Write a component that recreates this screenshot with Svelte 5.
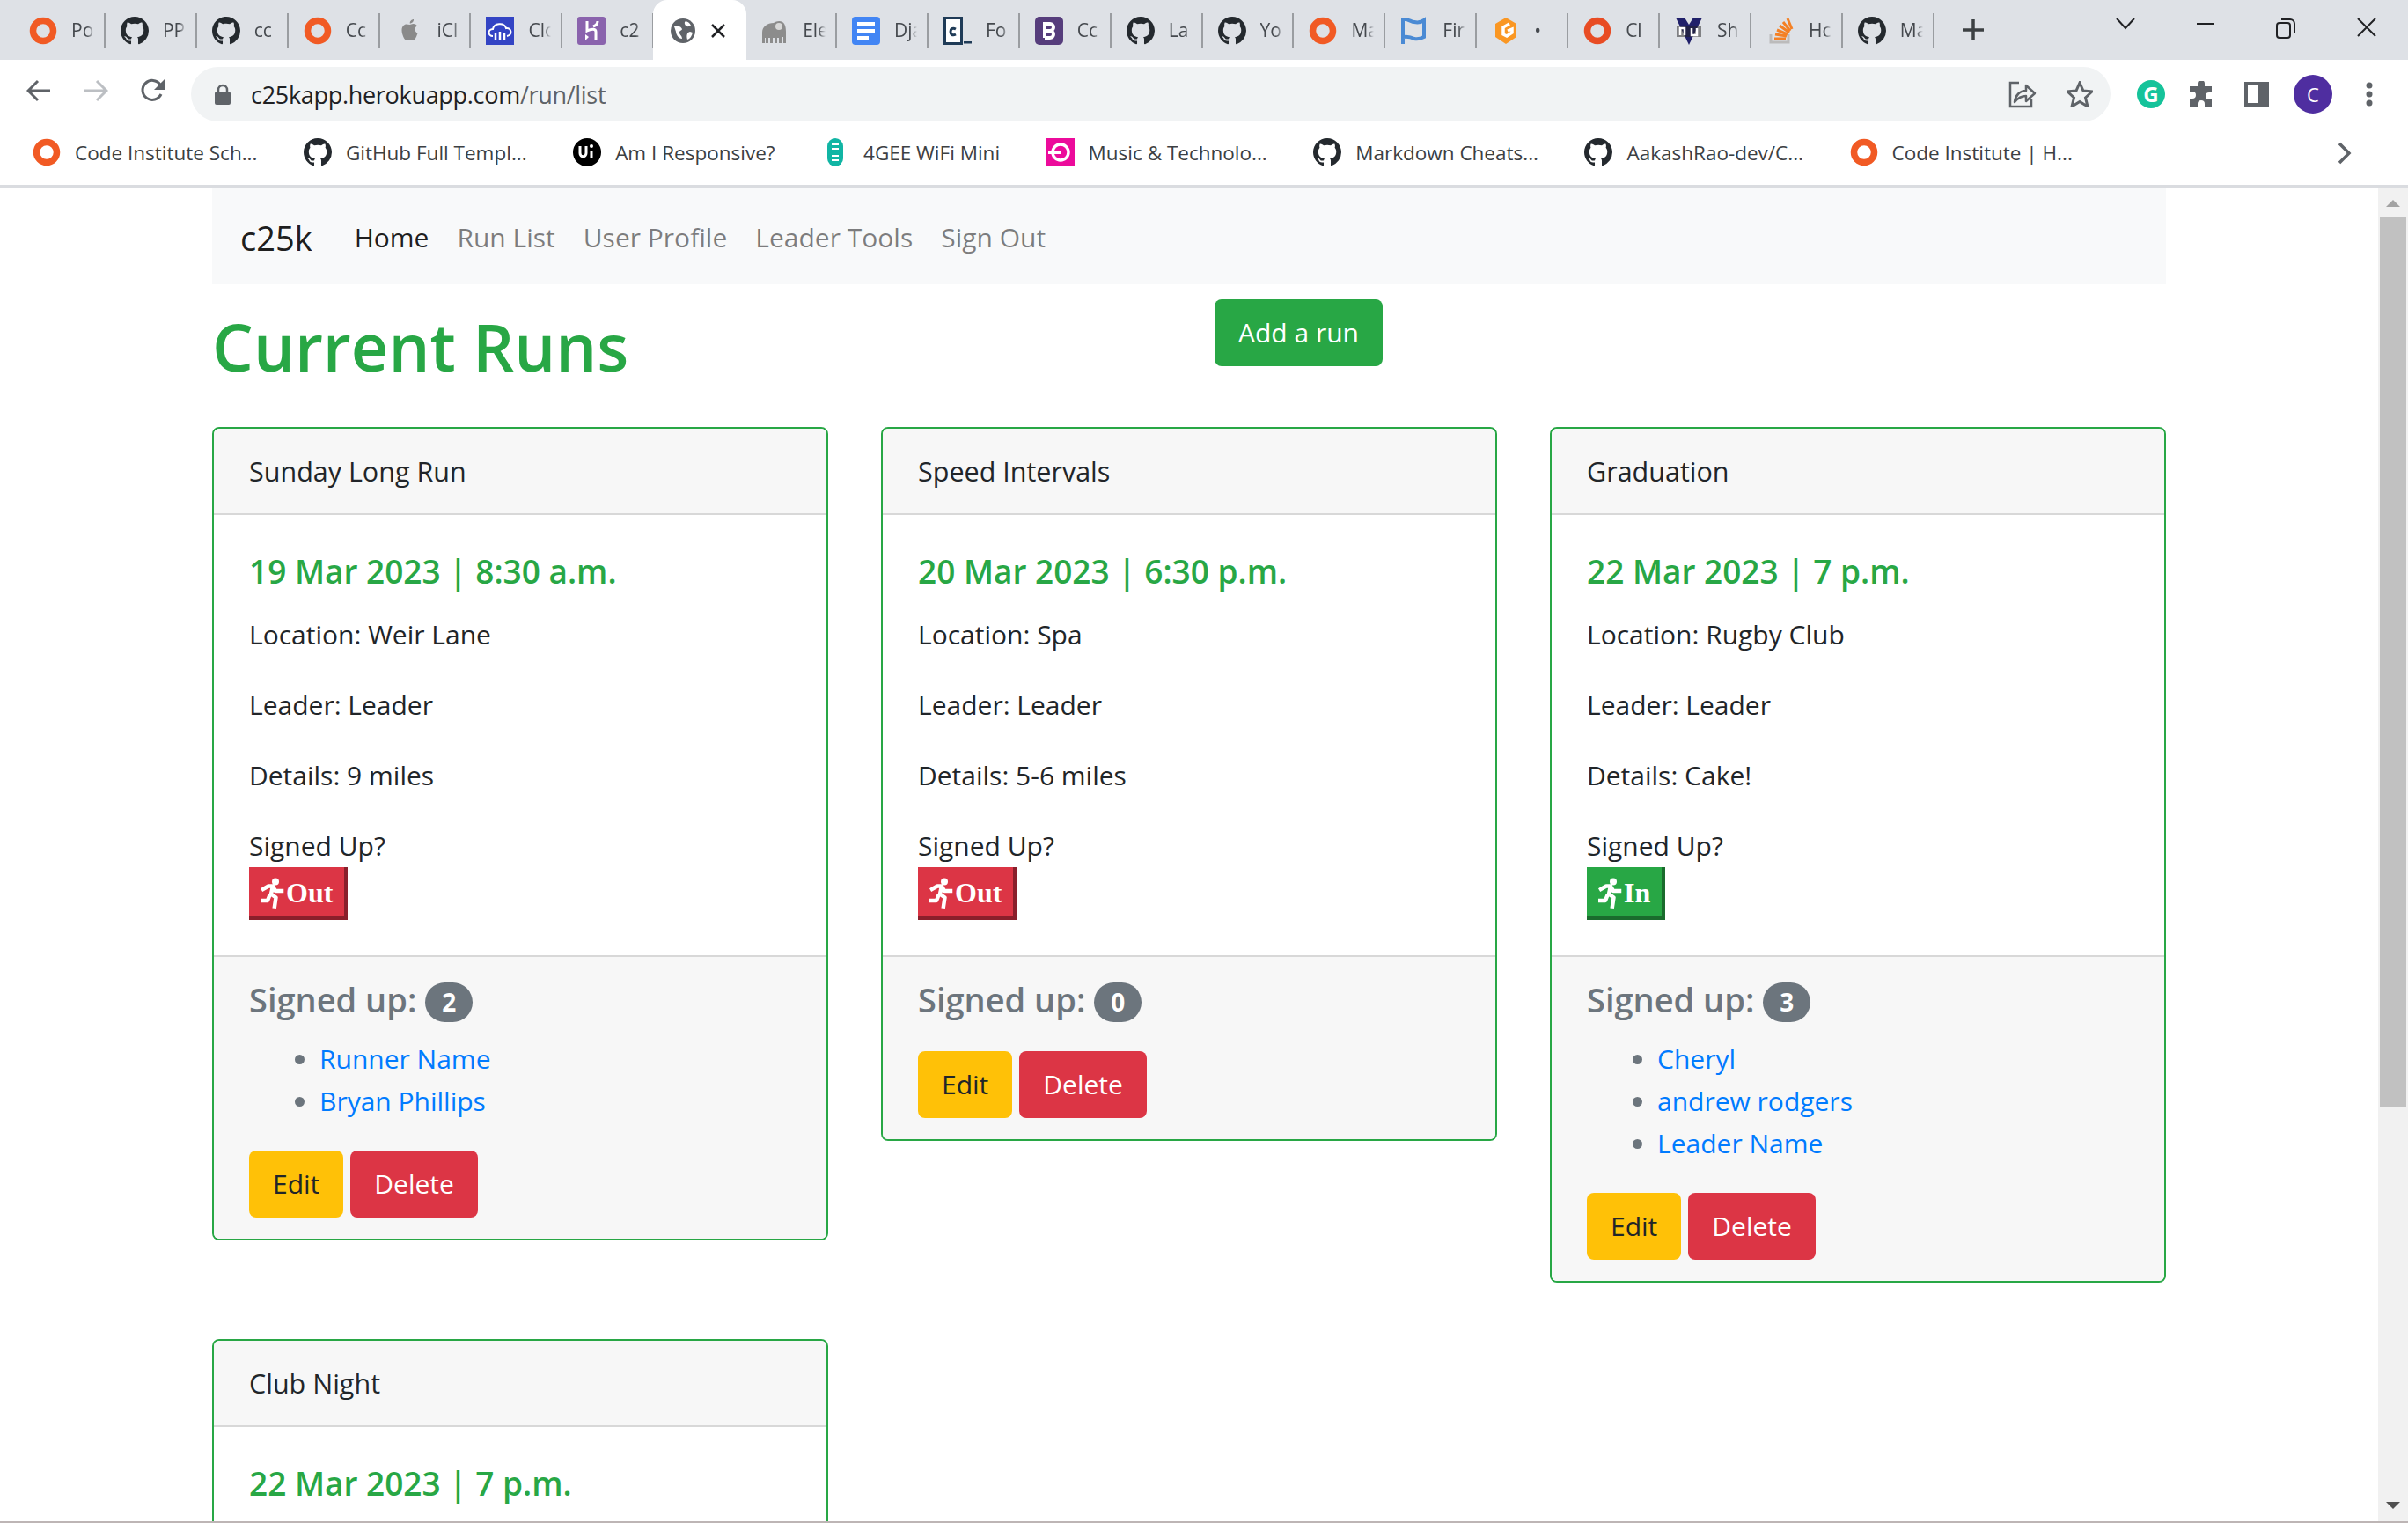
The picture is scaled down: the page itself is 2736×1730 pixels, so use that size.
<script>
	const ghPath = 'M8 0C3.58 0 0 3.58 0 8c0 3.54 2.29 6.53 5.47 7.59.4.07.55-.17.55-.38 0-.19-.01-.82-.01-1.49-2.01.37-2.53-.49-2.69-.94-.09-.23-.48-.94-.82-1.13-.28-.15-.68-.52-.01-.53.63-.01 1.08.58 1.23.82.72 1.21 1.87.87 2.33.66.07-.52.28-.87.51-1.07-1.78-.2-3.64-.89-3.64-3.95 0-.87.31-1.59.82-2.15-.08-.2-.36-1.02.08-2.12 0 0 .67-.21 2.2.82.64-.18 1.32-.27 2-.27.68 0 1.36.09 2 .27 1.53-1.04 2.2-.82 2.2-.82.44 1.1.16 1.92.08 2.12.51.56.82 1.27.82 2.15 0 3.07-1.87 3.75-3.65 3.95.29.25.54.73.54 1.48 0 1.07-.01 1.93-.01 2.2 0 .21.15.46.55.38A8.013 8.013 0 0016 8c0-4.42-3.58-8-8-8z';

	const tabs = [
		{ icon: 'ring', text: 'Po' },
		{ icon: 'gh', text: 'PP' },
		{ icon: 'gh', text: 'cc' },
		{ icon: 'ring', text: 'Cc' },
		{ icon: 'apple', text: 'iCl' },
		{ icon: 'cloud', text: 'Clo' },
		{ icon: 'heroku', text: 'c2' },
		{ icon: 'globe', text: '', active: true },
		{ icon: 'elephant', text: 'Ele' },
		{ icon: 'doc', text: 'Dja' },
		{ icon: 'cbox', text: 'Fo' },
		{ icon: 'boot', text: 'Cc' },
		{ icon: 'gh', text: 'La' },
		{ icon: 'gh', text: 'Yo' },
		{ icon: 'ring', text: 'Ma' },
		{ icon: 'flag', text: 'Fir' },
		{ icon: 'gitpod', text: '• ' },
		{ icon: 'ring2', text: 'Cl' },
		{ icon: 'nu', text: 'Sh' },
		{ icon: 'so', text: 'Hc' },
		{ icon: 'gh', text: 'Ma' }
	];

	const bookmarks = [
		{ icon: 'ring', text: 'Code Institute Sch...' },
		{ icon: 'gh', text: 'GitHub Full Templ...' },
		{ icon: 'ui', text: 'Am I Responsive?' },
		{ icon: 'ee', text: '4GEE WiFi Mini' },
		{ icon: 'music', text: 'Music & Technolo...' },
		{ icon: 'gh', text: 'Markdown Cheats...' },
		{ icon: 'gh', text: 'AakashRao-dev/C...' },
		{ icon: 'ring', text: 'Code Institute | H...' }
	];

	const navLinks = ['Run List', 'User Profile', 'Leader Tools', 'Sign Out'];

	const runs = [
		{ title: 'Sunday Long Run', date: '19 Mar 2023 | 8:30 a.m.', location: 'Weir Lane', details: '9 miles', signedIn: false, runners: ['Runner Name', 'Bryan Phillips'] },
		{ title: 'Speed Intervals', date: '20 Mar 2023 | 6:30 p.m.', location: 'Spa', details: '5-6 miles', signedIn: false, runners: [] },
		{ title: 'Graduation', date: '22 Mar 2023 | 7 p.m.', location: 'Rugby Club', details: 'Cake!', signedIn: true, runners: ['Cheryl', 'andrew rodgers', 'Leader Name'] },
		{ title: 'Club Night', date: '22 Mar 2023 | 7 p.m.', location: 'Weir Lane', details: '5 miles', signedIn: false, runners: [] }
	];
</script>

{#snippet favicon(kind)}
	<svg class="fav" viewBox="0 0 32 32" width="32" height="32">
		{#if kind === 'ring'}
			<circle cx="16" cy="16" r="11.5" fill="none" stroke="#f15a24" stroke-width="7.5" />
		{:else if kind === 'ring2'}
			<circle cx="16" cy="16" r="11.5" fill="none" stroke="#e84c24" stroke-width="7.5" />
		{:else if kind === 'gh'}
			<path transform="scale(2)" fill="#24292e" d={ghPath} />
		{:else if kind === 'apple'}
			<path fill="#8a8a8a" d="M21 3c.2 2.300-1.900 4.700-4.300 4.500-.2-2.200 2-4.500 4.300-4.500zM16.500 9c1.200 0 2.300-1 4.200-1 1.500 0 3.200.8 4.200 2.300-3.500 2-2.900 7 .6 8.400-.8 2.300-2.800 8.300-5 8.300-1.400 0-2.100-.9-3.700-.9s-2.400.9-3.700.9c-2.800 0-5.600-7.500-5.600-11.800 0-4.400 2.800-6.700 5.300-6.700 1.500 0 2.700.5 3.700.5z" />
		{:else if kind === 'cloud'}
			<rect width="32" height="32" fill="#3344c4" />
			<path fill="none" stroke="#fff" stroke-width="2" d="M8 22c-6 0-6-8 0-8 1-7 13-8 15-1 6-1 8 8 1 9" />
			<path fill="none" stroke="#fff" stroke-width="2.500" d="M11 26v-8M16 26v-9M21 26v-7" />
		{:else if kind === 'heroku'}
			<rect width="32" height="32" rx="3" fill="#8a63ad" />
			<path fill="none" stroke="#fff" stroke-width="3" d="M11 5v11c4-2 10-3 10 1v10M23 5c0 3-2 5-5 6" />
			<path fill="#fff" d="M9 20l4 3-4 4z" />
		{:else if kind === 'globe'}
			<circle cx="16" cy="16" r="14" fill="#5f6368" />
			<path fill="#fff" d="M6 11c5-1 8 0 9 3 0 2-3 1-3 4 0 3 3 3 3 7-4 0-7-5-7-8zM19 5c4 1 5 3 6 5-3 1-4 2-6 0-1-2-2-3 0-5zM24 17l3 1c-1 4-3 7-6 8-1-4-1-8 3-9z" />
		{:else if kind === 'elephant'}
			<path fill="#8c8c8c" d="M2 30V18C2 11 8 7 15 7c3-2 7-3 10-1 3 2 4 6 4 11v13h-3v-7h-2v7h-3v-6h-2v6h-3v-6h-2v6h-3v-6h-2v6H6v-6H5v6z" />
			<circle cx="21" cy="11" r="4" fill="#d8d8d8" />
		{:else if kind === 'doc'}
			<rect width="32" height="32" rx="4" fill="#4285f4" />
			<rect x="6" y="6" width="20" height="4" fill="#fff" />
			<rect x="6" y="14" width="20" height="4" fill="#fff" />
			<rect x="6" y="22" width="13" height="4" fill="#fff" />
		{:else if kind === 'cbox'}
			<rect x="1.500" y="1.500" width="19" height="29" fill="#fff" stroke="#1f3b57" stroke-width="3" />
			<path fill="none" stroke="#1f3b57" stroke-width="3" d="M14 14c-4-2-6 0-6 3s2 5 6 3" />
			<rect x="23" y="28" width="9" height="2.500" fill="#1f3b57" />
		{:else if kind === 'boot'}
			<rect width="32" height="32" rx="5" fill="#563d7c" />
			<path fill="none" stroke="#fff" stroke-width="4" d="M11 24V8h6a4 4 0 010 8h-6m6 0a4 4 0 010 8h-6" />
		{:else if kind === 'flag'}
			<path fill="none" stroke="#4a8ad4" stroke-width="4" d="M3 31V3c6-1 9 3 13 3 4 1 8 0 11-2v19c-4 2-7 3-11 2-4-2-8-3-13-2" />
		{:else if kind === 'gitpod'}
			<path fill="#ff8a00" opacity="0.85" d="M16 1l12 7v15l-12 8-12-8V8z" />
			<path fill="none" stroke="#fff" stroke-width="3.500" d="M20 8l-7 4v8l4 2 6-4v-4l-5 2" />
		{:else if kind === 'nu'}
			<path fill="#20206a" d="M1 1h10l5 8 5-8h10L16 32z" />
			<rect x="2" y="11" width="28" height="12" fill="#222" opacity="0.5" />
			<path fill="none" stroke="#fff" stroke-width="2.500" d="M6 21v-8h5v8M19 13v8h6v-8" />
		{:else if kind === 'so'}
			<path fill="none" stroke="#bcbbbb" stroke-width="3" d="M5 20v9h20v-9" />
			<path fill="none" stroke="#f48024" stroke-width="3" d="M9 25h13M10 20l13 2M12 15l12 5M15 10l11 8M19 6l8 10M24 2l5 12" />
		{:else if kind === 'ui'}
			<circle cx="16" cy="16" r="16" fill="#000" />
			<path fill="none" stroke="#fff" stroke-width="3" d="M8 9v8c0 5 7 5 7 0V9M21 14v9" />
			<circle cx="21" cy="9" r="2" fill="#fff" />
		{:else if kind === 'ee'}
			<rect x="7" width="18" height="32" rx="9" fill="#11b5a4" />
			<path fill="none" stroke="#fff" stroke-width="2" d="M12 7h8M12 12h8M12 20h8M12 25h8" />
		{:else if kind === 'music'}
			<rect width="32" height="32" fill="#ec0b9b" />
			<circle cx="16" cy="16" r="9" fill="none" stroke="#fff" stroke-width="3.500" />
			<rect x="2" y="14" width="14" height="4" fill="#fff" />
		{/if}
	</svg>
{/snippet}

{#snippet runner()}
	<svg class="runner" viewBox="0 0 28 36" width="28" height="36">
		<circle cx="17" cy="4.500" r="4" fill="#fff" />
		<path fill="none" stroke="#fff" stroke-width="4.500" stroke-linejoin="round" stroke-linecap="square" d="M3 13l6-3.500h5l-2 9 5.500 4-1.500 10M14 10l3 5h7M10 21l-2 5H2" />
	</svg>
{/snippet}

<div class="window">
	<div class="tabstrip">
		<div class="tabs">
			{#each tabs as tab}
				<div class="tab" class:active={tab.active}>
					{@render favicon(tab.icon)}
					{#if tab.active}
						<svg class="tab-close" viewBox="0 0 16 16" width="16" height="16"><path d="M1 1l14 14M15 1L1 15" stroke="#202124" stroke-width="2.500" /></svg>
					{:else}
						<span class="tab-text">{tab.text}</span>
					{/if}
				</div>
			{/each}
			<svg class="plus" viewBox="0 0 26 26" width="26" height="26"><path d="M13 1v24M1 13h24" stroke="#3c4043" stroke-width="3.500" /></svg>
		</div>
		<div class="win-controls">
			<svg viewBox="0 0 22 14" width="22" height="14"><path d="M1 1l10 11L21 1" fill="none" stroke="#202124" stroke-width="2" /></svg>
			<svg viewBox="0 0 20 14" width="20" height="14"><path d="M0 7h20" stroke="#202124" stroke-width="2" /></svg>
			<svg viewBox="0 0 22 24" width="22" height="24"><rect x="1" y="6" width="15" height="17" rx="3" fill="none" stroke="#202124" stroke-width="2" /><path d="M6 2h10a5 5 0 015 5v11" fill="none" stroke="#202124" stroke-width="2" /></svg>
			<svg viewBox="0 0 22 22" width="22" height="22"><path d="M1 1l20 20M21 1L1 21" stroke="#202124" stroke-width="2" /></svg>
		</div>
	</div>

	<div class="toolbar">
		<svg class="tool-icon" viewBox="0 0 28 26" width="28" height="26"><path d="M27 13H3M13 2L2 13l11 11" fill="none" stroke="#5f6368" stroke-width="3" /></svg>
		<svg class="tool-icon" viewBox="0 0 28 26" width="28" height="26"><path d="M1 13h24M15 2l11 11-11 11" fill="none" stroke="#bcbfc3" stroke-width="3" /></svg>
		<svg class="tool-icon" viewBox="0 0 28 28" width="28" height="28"><path d="M23 18a11 11 0 11-1-11" fill="none" stroke="#5f6368" stroke-width="3" /><path d="M27 1v12H15z" fill="#5f6368" /></svg>
		<div class="omnibox">
			<svg viewBox="0 0 18 24" width="18" height="24"><path d="M4 10V7a5 5 0 0110 0v3" fill="none" stroke="#5f6368" stroke-width="2.500" /><rect y="9" width="18" height="15" rx="2" fill="#5f6368" /></svg>
			<span class="url">c25kapp.herokuapp.com<span class="url-path">/run/list</span></span>
			<span class="omni-end">
				<svg viewBox="0 0 32 32" width="32" height="32"><path d="M12 3H2v27h24v-8" fill="none" stroke="#5f6368" stroke-width="2.500" /><path d="M7 25c1-8 6-13 13-13V6l10 9-10 9v-6c-5 0-9 2-13 7z" fill="#f1f3f4" stroke="#5f6368" stroke-width="2.500" stroke-linejoin="round" /></svg>
				<svg viewBox="0 0 30 30" width="30" height="30"><path d="M15 2l4 9 10 1-7.500 7 2.500 10-9-5.500L6 29l2.500-10L1 12l10-1z" fill="none" stroke="#5f6368" stroke-width="3" /></svg>
			</span>
		</div>
		<div class="extensions">
			<span class="grammarly">G</span>
			<svg viewBox="0 0 30 30" width="30" height="30"><path fill="#5f6368" d="M11 3a4 4 0 018 0v3h8v7h-3a4 4 0 000 8h3v8H19v-3a4 4 0 00-8 0v3H2V20h3a4 4 0 000-8H2V6h9z" /></svg>
			<svg viewBox="0 0 28 28" width="28" height="28"><rect x="2" y="2" width="24" height="24" fill="none" stroke="#5f6368" stroke-width="4" /><rect x="16" y="2" width="10" height="24" fill="#5f6368" /></svg>
			<span class="avatar">C</span>
			<svg class="dots" viewBox="0 0 8 28" width="8" height="28"><circle cx="4" cy="4" r="3.500" fill="#5f6368" /><circle cx="4" cy="14" r="3.500" fill="#5f6368" /><circle cx="4" cy="24" r="3.500" fill="#5f6368" /></svg>
		</div>
	</div>

	<div class="bookmarks">
		{#each bookmarks as mark}
			<div class="bookmark">
				{@render favicon(mark.icon)}
				<span>{mark.text}</span>
			</div>
		{/each}
		<svg class="more" viewBox="0 0 18 26" width="18" height="26"><path d="M3 2l11 11L3 24" fill="none" stroke="#5f6368" stroke-width="3.500" /></svg>
	</div>

	<div class="viewport">
		<div class="page">
			<div class="container">
				<nav class="navbar">
					<span class="brand">c25k</span>
					<span class="nav-link current">Home</span>
					{#each navLinks as link}
						<span class="nav-link">{link}</span>
					{/each}
				</nav>

				<div class="heading-row">
					<h1>Current Runs</h1>
					<button class="btn btn-success">Add a run</button>
				</div>

				<div class="cards">
					{#each runs as run}
						<div class="card">
							<div class="card-header">{run.title}</div>
							<div class="card-body">
								<h5 class="card-title">{run.date}</h5>
								<p>Location: {run.location}</p>
								<p>Leader: Leader</p>
								<p>Details: {run.details}</p>
								<div class="signup-label">Signed Up?</div>
								<button class="toggle" class:in={run.signedIn}>
									{@render runner()}{run.signedIn ? 'In' : 'Out'}
								</button>
							</div>
							<div class="card-footer">
								<h5 class="signed-count" class:none={!run.runners.length}>Signed up: <span class="badge">{run.runners.length}</span></h5>
								{#if run.runners.length}
									<ul>
										{#each run.runners as name}
											<li><a href="#top">{name}</a></li>
										{/each}
									</ul>
								{/if}
								<div class="actions">
									<button class="btn btn-warning">Edit</button>
									<button class="btn btn-danger">Delete</button>
								</div>
							</div>
						</div>
					{/each}
				</div>
			</div>
		</div>
		<div class="scrollbar">
			<div class="arrow-up"></div>
			<div class="thumb"></div>
			<div class="arrow-down"></div>
		</div>
	</div>
	<div class="taskbar-edge"></div>
</div>

<style>
	:global(body) {
		margin: 0;
		background: #fff;
	}

	.window {
		width: 2736px;
		height: 1730px;
		display: flex;
		flex-direction: column;
		overflow: hidden;
		font-family: 'Open Sans', 'Noto Sans', sans-serif;
		color: #212529;
	}

	/* chrome */
	.tabstrip {
		height: 68px;
		flex: none;
		background: #dee1e6;
		display: flex;
		justify-content: space-between;
	}

	.tabs {
		display: flex;
		padding-left: 16px;
		align-items: flex-start;
	}

	.tab {
		width: 103.9px;
		height: 68px;
		box-sizing: border-box;
		padding: 19px 0 0 17px;
		display: flex;
		gap: 16px;
		position: relative;
		overflow: hidden;
		font-size: 21px;
		color: #45494e;
	}

	.tab::after {
		content: '';
		position: absolute;
		right: 0;
		top: 15px;
		height: 40px;
		width: 2px;
		background: #9a9da1;
	}

	.tab.active {
		width: 105.9px;
		margin: 0 -1px;
		background: #fff;
		border-radius: 16px 16px 0 0;
		color: #202124;
		padding-left: 18px;
	}

	.tab.active::after {
		display: none;
	}

	.fav {
		flex: none;
	}

	.tab-text {
		width: 26px;
		overflow: hidden;
		white-space: nowrap;
		line-height: 30px;
		mask-image: linear-gradient(to right, #000 70%, transparent);
	}

	.tab-close {
		margin-top: 8px;
		flex: none;
	}

	.plus {
		margin: 21px 0 0 31px;
	}

	.win-controls {
		display: flex;
		align-items: flex-start;
		gap: 70px;
		padding: 20px 36px 0 0;
	}

	.toolbar {
		height: 70px;
		flex: none;
		background: #fff;
		display: flex;
		align-items: center;
		padding-left: 30px;
		box-sizing: border-box;
	}

	.tool-icon {
		margin-right: 37px;
		flex: none;
	}

	.omnibox {
		width: 2181px;
		height: 62px;
		margin: 8px 0 0 -8px;
		border-radius: 31px;
		background: #f1f3f4;
		display: flex;
		align-items: center;
		padding: 0 20px 0 27px;
		box-sizing: border-box;
		flex: none;
		gap: 23px;
	}

	.url {
		font-size: 27px;
		color: #202124;
		letter-spacing: -0.3px;
	}

	.url-path {
		color: #5f6368;
	}

	.omni-end {
		margin-left: auto;
		display: flex;
		gap: 34px;
		align-items: center;
	}

	.extensions {
		display: flex;
		align-items: center;
		margin: 8px 0 0 30px;
	}

	.grammarly {
		width: 32px;
		height: 32px;
		border-radius: 50%;
		background: #15c39a;
		color: #fff;
		font-size: 24px;
		font-weight: 700;
		line-height: 32px;
		text-align: center;
		margin-right: 26px;
	}

	.extensions svg {
		margin-right: 34px;
		flex: none;
	}

	.avatar {
		width: 44px;
		height: 44px;
		border-radius: 50%;
		background: #4f2ea0;
		color: #fff;
		font-size: 22px;
		line-height: 44px;
		text-align: center;
		margin: 0 38px 0 -6px;
		flex: none;
	}

	.bookmarks {
		height: 75px;
		flex: none;
		box-sizing: border-box;
		border-bottom: 3px solid #dadce0;
		display: flex;
		align-items: center;
		padding: 0 0 2px 37px;
		gap: 52.5px;
		font-size: 22.5px;
		color: #3c4043;
		position: relative;
	}

	.bookmark {
		display: flex;
		align-items: center;
		gap: 16px;
		white-space: nowrap;
	}

	.more {
		position: absolute;
		left: 2655px;
		top: 23px;
	}

	/* page */
	.viewport {
		flex: 1;
		min-height: 0;
		display: flex;
		background: #fff;
	}

	.page {
		flex: 1;
		min-width: 0;
		overflow: hidden;
	}

	.container {
		width: 2220px;
		margin-left: 241px;
		font-size: 30px;
		line-height: 48px;
	}

	.navbar {
		height: 110px;
		background: #f8f9fa;
		display: flex;
		align-items: center;
		padding: 4px 32px 0;
		box-sizing: border-box;
		gap: 32px;
	}

	.brand {
		font-size: 38px;
		color: rgba(0, 0, 0, 0.9);
		margin-right: 16px;
	}

	.nav-link {
		color: rgba(0, 0, 0, 0.5);
	}

	.nav-link.current {
		color: rgba(0, 0, 0, 0.9);
	}

	.heading-row {
		display: flex;
		align-items: flex-start;
		height: 162px;
	}

	h1 {
		margin: 23px 0 0;
		width: 1139px;
		font-size: 74px;
		line-height: 96px;
		font-weight: 600;
		color: #28a745;
	}

	.heading-row .btn {
		margin-top: 17px;
	}

	.btn {
		font: inherit;
		padding: 12px 25px;
		border: 2px solid transparent;
		border-radius: 8px;
		line-height: 48px;
	}

	.btn-success {
		background: #28a745;
		color: #fff;
	}

	.btn-warning {
		background: #ffc107;
		color: #212529;
	}

	.btn-danger {
		background: #dc3545;
		color: #fff;
	}

	.cards {
		display: grid;
		grid-template-columns: repeat(3, 700px);
		column-gap: 60px;
		row-gap: 64px;
		align-items: start;
	}

	.card {
		border: 2px solid #28a745;
		border-radius: 8px;
		overflow: hidden;
		background: #fff;
	}

	.card-header {
		padding: 24px 40px;
		background: #f7f7f7;
		border-bottom: 2px solid #d8d8d8;
		font-size: 30.5px;
	}

	.card-body {
		padding: 40px;
	}

	.card-title {
		margin: 0 0 24px;
		font-size: 37px;
		line-height: 48px;
		font-weight: 600;
		color: #28a745;
	}

	p {
		margin: 0 0 32px;
	}

	.toggle {
		display: block;
		height: 60px;
		padding: 0 13px;
		border-width: 0 4px 4px 0;
		border-style: solid;
		border-color: #8a1f2b;
		background: #dc3545;
		color: #fff;
		font-family: 'Liberation Serif', serif;
		font-weight: 700;
		font-size: 32px;
		line-height: 58px;
		white-space: nowrap;
	}

	.toggle.in {
		background: #28a745;
		border-color: #1a6b2d;
	}

	.runner {
		vertical-align: -8px;
		margin-right: 1px;
	}

	.card-footer {
		padding: 24px 40px;
		background: #f7f7f7;
		border-top: 2px solid #d8d8d8;
	}

	.signed-count {
		margin: 0 0 18px;
		font-size: 38px;
		line-height: 48px;
		font-weight: 600;
		color: #6c757d;
	}

	.signed-count.none {
		margin-bottom: 33px;
	}

	.badge {
		display: inline-block;
		min-width: 54px;
		box-sizing: border-box;
		height: 45px;
		padding: 0 18px;
		border-radius: 24px;
		background: #6c757d;
		color: #fff;
		font-size: 28px;
		font-weight: 700;
		line-height: 45px;
		text-align: center;
		vertical-align: 1px;
	}

	ul {
		margin: 0 0 32px;
		padding-left: 80px;
		color: #6c757d;
	}

	a {
		color: #007bff;
		text-decoration: none;
	}

	.actions {
		display: flex;
		gap: 8px;
	}

	/* scrollbar */
	.scrollbar {
		width: 34px;
		flex: none;
		background: #f1f1f1;
		display: flex;
		flex-direction: column;
		align-items: center;
		position: relative;
	}

	.arrow-up {
		margin-top: 14px;
		border: 8px solid transparent;
		border-top: 0;
		border-bottom-color: #a3a3a3;
	}

	.thumb {
		width: 30px;
		height: 1011px;
		margin-top: 11px;
		background: #c1c1c1;
	}

	.arrow-down {
		margin-top: auto;
		margin-bottom: 14px;
		border: 8px solid transparent;
		border-bottom: 0;
		border-top-color: #505050;
	}

	.taskbar-edge {
		height: 2px;
		flex: none;
		background: #bdb5b5;
	}
</style>
